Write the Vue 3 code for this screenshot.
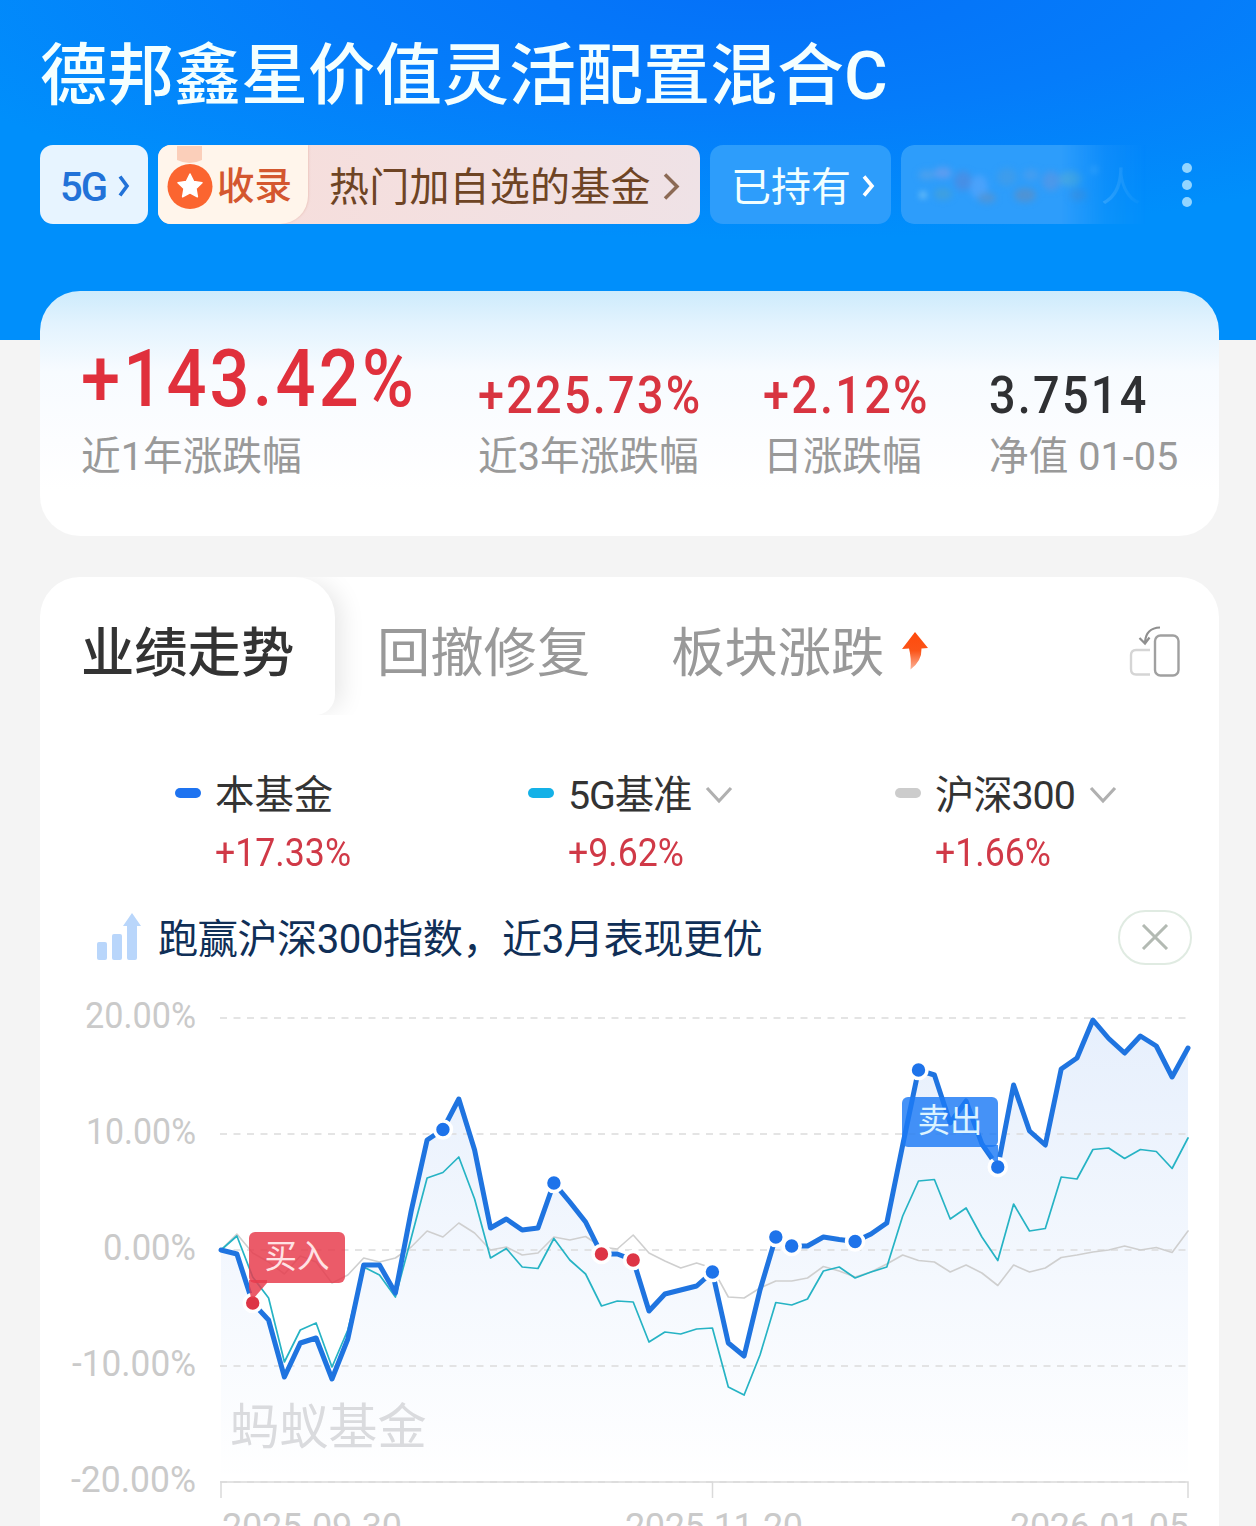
<template>
  <div class="page">
    <header class="hero">
      <h1 class="title">德邦鑫星价值灵活配置混合C</h1>
      <div class="tags">
        <div class="tag tag-light">
          <span class="tag-text">5G</span>
          <svg class="arrow" width="12" height="22" viewBox="0 0 12 22">
            <path d="M2 1.5 L9 11 L2 20.5" fill="none" stroke="#2272d8" stroke-width="3.6" />
          </svg>
        </div>
        <div class="tag tag-hot">
          <div class="medal-box">
            <svg class="medal" width="46" height="79" viewBox="0 0 46 79">
              <path d="M10 1 H35 V15 Q22.500 21 10 15 Z" fill="#fbcfba" />
              <circle cx="23" cy="41.500" r="22.500" fill="#fb6530" />
              <path d="M23 29 L26.700 36.500 L35 37.700 L29 43.500 L30.400 51.800 L23 47.900 L15.600 51.800 L17 43.500 L11 37.700 L19.300 36.500 Z" fill="#fff" stroke="#fff" stroke-width="1.500" stroke-linejoin="round" />
            </svg>
            <span class="medal-text">收录</span>
          </div>
          <span class="tag-text">热门加自选的基金</span>
          <svg class="arrow" width="17" height="27" viewBox="0 0 17 27">
            <path d="M2 1.500 L14 13.500 L2 25.500" fill="none" stroke="#8c6a55" stroke-width="3.500" />
          </svg>
        </div>
        <div class="tag tag-hold">
          <span class="tag-text">已持有</span>
          <svg class="arrow" width="13" height="22" viewBox="0 0 13 22">
            <path d="M2 1.500 L10 11 L2 20.500" fill="none" stroke="#fff" stroke-width="3.600" />
          </svg>
        </div>
        <div class="tag tag-fade">
          <svg class="smudge" width="182" height="44" viewBox="0 0 182 44">
            <g v-for="(s, i) in smudges" :key="i">
              <ellipse :cx="s[0]" :cy="s[1]" :rx="s[2]" :ry="s[3]" :fill="s[4]" />
            </g>
          </svg>
          <span class="tag-text">人</span>
        </div>
        <div class="more"><i></i><i></i><i></i></div>
      </div>
    </header>

    <section class="stats">
      <div v-for="s in stats" :key="s.label" class="stat" :class="s.cls">
        <div class="stat-value">{{ s.value }}</div>
        <div class="stat-label">{{ s.label }}</div>
      </div>
    </section>

    <section class="card">
      <div class="tabs">
        <div class="tab active">业绩走势</div>
        <div class="tab">回撤修复</div>
        <div class="tab">板块涨跌</div>
        <svg class="up" width="28" height="40" viewBox="0 0 28 40">
          <defs>
            <linearGradient id="upFill" x1="0" y1="0" x2="0" y2="1">
              <stop offset="0" stop-color="#ff4a0c" />
              <stop offset="0.500" stop-color="#fb5418" />
              <stop offset="1" stop-color="#fbb49a" />
            </linearGradient>
          </defs>
          <path d="M14 1 L27 17 L20.500 17.500 Q21 30 9.500 38.500 Q10.500 27 8 17.500 L1 18 Z" fill="url(#upFill)" />
        </svg>
        <svg class="rotate" width="52" height="52" viewBox="0 0 52 52" fill="none">
          <rect x="26" y="9.500" width="23.500" height="40" rx="5.500" stroke="#a0a0a0" stroke-width="2.400" />
          <path d="M21 24 H7 Q2 24 2 29 V43 Q2 48.500 7 48.500 H21" stroke="#d5d5d5" stroke-width="2.400" />
          <path d="M31 1.500 Q17 2 16 16 M10.500 12 L16 17.500 L20.500 11.500" stroke="#8f8f8f" stroke-width="2.200" />
        </svg>
      </div>

      <div class="legend">
        <div v-for="l in legend" :key="l.name" class="legend-item" :class="l.cls">
          <i class="pill"></i>
          <div>
            <div class="legend-name">
              {{ l.name }}
              <svg v-if="l.more" width="28" height="18" viewBox="0 0 28 18">
                <path d="M2 2 L14 15 L26 2" fill="none" stroke="#b0b0b0" stroke-width="3.200" />
              </svg>
            </div>
            <div class="legend-value">{{ l.value }}</div>
          </div>
        </div>
      </div>

      <div class="notice">
        <svg width="46" height="48" viewBox="0 0 46 48" fill="#b9d6fb">
          <rect x="1" y="29" width="10" height="18" rx="2" />
          <rect x="16" y="21" width="10" height="26" rx="2" />
          <path d="M36 0 L45 13 H41 V45 Q41 47 39 47 H33 Q31 47 31 45 V13 H27 Z" />
        </svg>
        <span class="notice-text">跑赢沪深300指数，近3月表现更优</span>
        <div class="close">
          <svg width="28" height="26" viewBox="0 0 28 26">
            <path d="M2 1 L26 25 M26 1 L2 25" stroke="#b3bab3" stroke-width="3" />
          </svg>
        </div>
      </div>

      <svg class="chart" width="1179" height="546" viewBox="40 980 1179 546">
        <defs>
          <linearGradient id="area" gradientUnits="userSpaceOnUse" x1="0" y1="1018" x2="0" y2="1482">
            <stop offset="0" stop-color="#1e6fe8" stop-opacity="0.110" />
            <stop offset="1" stop-color="#1e6fe8" stop-opacity="0" />
          </linearGradient>
        </defs>
        <path :d="areaPath" fill="url(#area)" />
        <g v-for="g in grid" :key="g.text">
          <line x1="220" :y1="g.y" x2="1189" :y2="g.y" class="grid-line" />
          <text
            x="196"
            :y="g.y + 9.5"
            class="axis"
            text-anchor="end"
            :textLength="g.w"
            lengthAdjust="spacingAndGlyphs"
          >{{ g.text }}</text>
        </g>
        <path d="M221 1498 V1482 H1188 V1498 M712.500 1482 V1498" fill="none" stroke="#dadada" stroke-width="1.500" />
        <text x="230" y="1443.500" class="watermark">蚂蚁基金</text>
        <polyline :points="toPoints(hs300)" class="line-gray" />
        <polyline :points="toPoints(base)" class="line-cyan" />
        <polyline :points="toPoints(fund)" class="line-fund" />

        <circle
          v-for="d in dots"
          :key="d.i"
          :cx="px(d.i)"
          :cy="fund[d.i]"
          r="8.500"
          :fill="d.buy ? '#dd3545' : '#1e73ea'"
          stroke="#fff"
          stroke-width="3.600"
        />
        <g class="mark-buy">
          <rect x="249" y="1232" width="96" height="51" rx="6" />
          <path d="M249 1280 V1288 L251 1298 H254 L267 1283 V1280 Z" />
          <text x="297" y="1267.500">买入</text>
        </g>
        <g class="mark-sell">
          <rect x="902" y="1097" width="96" height="50" rx="6" />
          <path d="M980 1145 H998 V1161 H994 Z" />
          <text x="950" y="1131.500">卖出</text>
        </g>

        <text x="222" y="1539" class="axis" textLength="180">2025-09-30</text>
        <text x="625" y="1539" class="axis" textLength="178">2025-11-20</text>
        <text x="1010" y="1539" class="axis" textLength="179">2026-01-05</text>
      </svg>
    </section>
  </div>
</template>

<script setup>
const stats = [
  { value: "+143.42%", label: "近1年涨跌幅", cls: "year" },
  { value: "+225.73%", label: "近3年涨跌幅", cls: "three" },
  { value: "+2.12%", label: "日涨跌幅", cls: "day" },
  { value: "3.7514", label: "净值 01-05", cls: "net" },
];

const legend = [
  { name: "本基金", value: "+17.33%", cls: "fund" },
  { name: "5G基准", value: "+9.62%", cls: "base", more: true },
  { name: "沪深300", value: "+1.66%", cls: "hs", more: true },
];

const grid = [
  { text: "20.00%", y: 1018, w: 111 },
  { text: "10.00%", y: 1134, w: 110 },
  { text: "0.00%", y: 1250, w: 93 },
  { text: "-10.00%", y: 1366, w: 124 },
  { text: "-20.00%", y: 1482, w: 125 },
];

// 标签里打码的文字
const smudges = [
  [8, 12, 9, 5, "#4aa0ee"], [4, 32, 3, 3, "#8fd0f5"], [24, 10, 9, 6, "#5c9df0"],
  [24, 31, 9, 6, "#3f9fe0"], [44, 18, 9, 10, "#468fe6"], [60, 24, 9, 12, "#4aa2fb"],
  [68, 35, 9, 5, "#4f95d8"], [88, 14, 10, 9, "#3d9cec"], [106, 32, 11, 7, "#4f93d4"],
  [112, 12, 8, 6, "#439df0"], [132, 18, 9, 10, "#4b98ea"], [152, 16, 11, 8, "#49a7e2"],
  [160, 32, 9, 6, "#4193e0"], [176, 7, 3, 3, "#7cc6fa"],
];

// 各交易日的纵坐标
const fund = [
  1250, 1254, 1303, 1320, 1377, 1343, 1338, 1379, 1339, 1265, 1265, 1293, 1211, 1140, 1129.5, 1099,
  1150, 1228, 1219, 1230, 1228, 1183, 1202, 1222, 1254, 1254, 1260, 1311, 1294, 1290, 1286, 1272,
  1343, 1356, 1290, 1237, 1246, 1246, 1237, 1239.5, 1241.5, 1234, 1223, 1145, 1070, 1075, 1123, 1101,
  1144, 1167, 1085, 1131, 1145, 1069, 1058, 1020, 1038.5, 1053, 1036, 1046, 1077, 1048,
];
const base = [
  1250, 1236, 1277, 1298, 1362, 1330, 1323, 1367, 1330, 1267, 1275, 1297, 1238, 1178, 1172.5, 1157,
  1199, 1258, 1248.5, 1267, 1268.5, 1238.5, 1260, 1274, 1306, 1301, 1302, 1342, 1332, 1334, 1329, 1328,
  1387, 1395, 1355, 1302.5, 1305, 1299, 1271, 1267, 1278, 1272, 1267, 1216, 1181, 1179.5, 1219, 1208,
  1237, 1260.5, 1204, 1231, 1228.5, 1177, 1179, 1149.5, 1148, 1158.5, 1149.5, 1151.5, 1168.5, 1138,
];
const hs300 = [
  1250, 1234, 1253, 1262, 1274, 1256, 1262, 1283, 1275, 1258, 1262, 1258, 1247, 1231, 1237, 1223,
  1233, 1250, 1247, 1255, 1253, 1237, 1240, 1236.5, 1247, 1249, 1235, 1253, 1261, 1268, 1263, 1268,
  1297, 1298, 1288, 1281, 1281, 1278, 1266.5, 1271, 1277, 1272, 1264, 1255, 1260.5, 1262, 1272, 1265,
  1273, 1285.5, 1265, 1272, 1268, 1257.5, 1255, 1252, 1250, 1246, 1250, 1247.5, 1252.5, 1231,
];

const dots = [
  { i: 2, buy: true }, { i: 14 }, { i: 21 }, { i: 24, buy: true }, { i: 26, buy: true }, { i: 31 },
  { i: 35 }, { i: 36 }, { i: 40 }, { i: 44 }, { i: 49 },
];

const px = (i) => 221 + (i * 967) / 61;
const toPoints = (arr) => arr.map((y, i) => `${px(i).toFixed(1)},${y}`).join(" ");
const areaPath = `M221 1482 L${toPoints(fund)} L1188 1482 Z`;
</script>

<style>
body {
  margin: 0;
  background: #f4f4f4;
}
</style>

<style scoped>
.page {
  width: 1256px;
  height: 1526px;
  overflow: hidden;
  background: #f4f4f4;
  font-family: Roboto, "Noto Sans CJK SC", sans-serif;
  color: #333;
}

.hero {
  height: 340px;
  box-sizing: border-box;
  padding: 36px 40px 0;
  background: radial-gradient(ellipse 900px 260px at 760px -20px, #0570f8 0%, #057cfa 50%, #008ffb 100%);
}

.title {
  margin: 0;
  height: 80px;
  line-height: 80px;
  font-size: 67px;
  font-weight: 500;
  color: #f4ffff;
  white-space: nowrap;
}

.tags {
  display: flex;
  gap: 10px;
  margin-top: 29px;
}

.tag {
  height: 79px;
  box-sizing: border-box;
  display: flex;
  align-items: center;
  border-radius: 13px;
  font-size: 40px;
  white-space: nowrap;
  overflow: hidden;
}

.tag-text {
  line-height: 72px;
  padding-top: 7px;
}

.arrow {
  flex: none;
  margin-top: 3px;
}

.tag-light {
  width: 108px;
  padding-left: 20px;
  gap: 12px;
  background: #e7f4ff;
  color: #2272d8;
  font-weight: 500;
}

.tag-light .tag-text {
  letter-spacing: -2px;
}

.tag-hot {
  width: 542px;
  background: linear-gradient(90deg, #f8ddd9, #efe2e6);
  color: #6e4424;
}

.medal-box {
  width: 150px;
  height: 79px;
  display: flex;
  align-items: center;
  box-sizing: border-box;
  padding-left: 9px;
  margin-right: 21px;
  border-radius: 0 0 28px 0;
  background: #fff5eb;
  box-shadow: 1px 0 2px #ecc8c0;
}

.medal-text {
  margin-left: 4px;
  padding-top: 4px;
  font-size: 37.5px;
  font-weight: 500;
  line-height: 75px;
  color: #d4572f;
}

.tag-hot .tag-text {
  letter-spacing: 0.2px;
}

.tag-hot .arrow {
  margin-left: 12px;
}

.tag-hold {
  width: 181px;
  padding-left: 21px;
  gap: 11px;
  background: #2d9dfb;
  color: #f2ffff;
}

.tag-fade {
  width: 250px;
  padding-left: 18px;
  background: #2d9dfb;
  color: #a5d9ff;
  border-radius: 13px 0 0 13px;
  -webkit-mask-image: linear-gradient(90deg, #000 64%, rgba(0, 0, 0, 0.25) 82%, transparent 98%);
  mask-image: linear-gradient(90deg, #000 64%, rgba(0, 0, 0, 0.25) 82%, transparent 98%);
}

.smudge {
  flex: none;
  filter: blur(3px);
}

.more {
  width: 10px;
  height: 79px;
  margin-left: 21px;
  display: flex;
  flex-direction: column;
  justify-content: center;
  gap: 7px;
}

.more i {
  width: 10px;
  height: 10px;
  border-radius: 50%;
  background: #93d5ff;
}

.stats {
  position: relative;
  display: flex;
  width: 1179px;
  height: 245px;
  box-sizing: border-box;
  margin: -49px 0 0 40px;
  padding: 53px 0 0 41px;
  border-radius: 40px;
  background: linear-gradient(180deg, #cdebfc 0, #e3f3fe 34px, #f7fbff 80px, #fcfdff 150px, #fff 200px);
}

.stat {
  white-space: nowrap;
}

.stat-value {
  height: 83px;
  line-height: 104px;
  font-size: 52px;
  font-weight: 500;
  color: #d83440;
  letter-spacing: 2.5px;
  transform: scaleX(0.9);
  transform-origin: 0 0;
}

.stat-label {
  height: 60px;
  line-height: 60px;
  font-size: 39.7px;
  color: #999;
}

.year {
  width: 397px;
}

.three {
  width: 285px;
}

.day {
  width: 226px;
}

.year .stat-value {
  line-height: 71px;
  font-size: 80px;
  color: #e0303c;
  letter-spacing: 3.6px;
  transform: scaleX(0.88);
}

.net .stat-value {
  color: #2f3033;
}

.card {
  width: 1179px;
  height: 949px;
  margin: 41px 0 0 40px;
  border-radius: 40px 40px 0 0;
  background: #fff;
  overflow: hidden;
}

.tabs {
  display: flex;
  height: 150px;
}

.tab {
  height: 150px;
  line-height: 154px;
  font-size: 53.3px;
  color: #999;
  margin-right: 81px;
  white-space: nowrap;
}

.tab.active {
  width: 295px;
  height: 138px;
  box-sizing: border-box;
  padding-left: 41px;
  margin-right: 42px;
  color: #333;
  font-weight: 500;
  border-radius: 0 40px 20px 0;
  box-shadow: 12px 0 24px -6px rgba(0, 0, 0, 0.1);
  clip-path: inset(0 -50px 0 0);
}

.tab:nth-child(3) {
  margin-right: 17px;
}

.up {
  margin-top: 54px;
}

.rotate {
  margin: 49px 38px 0 auto;
}

.legend {
  display: flex;
  height: 160px;
  padding-top: 20px;
}

.legend-item {
  display: flex;
  padding-top: 20px;
  box-sizing: border-box;
}

.legend-item.fund {
  padding-left: 135px;
  width: 488px;
}

.legend-item.base {
  width: 367px;
}

.pill {
  width: 26px;
  height: 10px;
  margin: 21px 14px 0 0;
  border-radius: 5px;
  background: #1e73f0;
}

.base .pill {
  background: #14b1e7;
}

.hs .pill {
  background: #ccc;
}

.legend-name {
  display: flex;
  align-items: center;
  gap: 14px;
  height: 58px;
  line-height: 58px;
  font-size: 39.4px;
  color: #333;
  white-space: nowrap;
}

.base .legend-name,
.hs .legend-name {
  letter-spacing: -1.1px;
}

.legend-name svg {
  margin-top: -3px;
}

.legend-value {
  line-height: 56px;
  font-size: 39px;
  color: #d03947;
  transform: scaleX(0.915);
  transform-origin: 0 0;
}

.notice {
  display: flex;
  align-items: center;
  height: 60px;
  padding-left: 56px;
}

.notice-text {
  margin-left: 16px;
  padding-top: 5px;
  line-height: 56px;
  font-size: 40.2px;
  letter-spacing: -0.5px;
  color: #102f57;
  white-space: nowrap;
}

.close {
  width: 74px;
  height: 55px;
  box-sizing: border-box;
  margin: 0 27px 0 auto;
  display: flex;
  align-items: center;
  justify-content: center;
  border: 2px solid #e0ebe2;
  border-radius: 28px;
}

.chart {
  display: block;
  margin-top: 13px;
}

.grid-line {
  stroke: #dcdcdc;
  stroke-width: 1.6;
  stroke-dasharray: 7 6.5;
}

.axis {
  font-size: 36px;
  fill: #cacaca;
}

.watermark {
  font-size: 49.2px;
  fill: #dadbde;
}

.line-gray,
.line-cyan,
.line-fund {
  fill: none;
  stroke-linejoin: round;
  stroke-linecap: round;
}

.line-gray {
  stroke: #cfcfcf;
  stroke-width: 1.6;
}

.line-cyan {
  stroke: #26b3c4;
  stroke-width: 1.7;
}

.line-fund {
  stroke: #1f74e0;
  stroke-width: 5;
}

.mark-buy {
  fill: #e73c4c;
  fill-opacity: 0.84;
}

.mark-sell {
  fill: #1c7af5;
  fill-opacity: 0.82;
}

.mark-buy text,
.mark-sell text {
  font-size: 32.5px;
  text-anchor: middle;
  fill: #ffe2e4;
  fill-opacity: 1;
}

.mark-sell text {
  fill: #dcf3ff;
}
</style>
